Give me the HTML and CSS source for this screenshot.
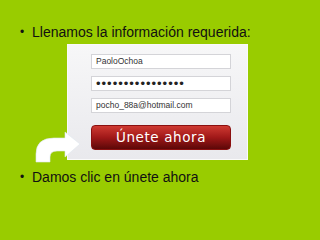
FILE: index.html
```html
<!DOCTYPE html>
<html lang="es">
<head>
    <meta charset="UTF-8">
    <meta name="viewport" content="width=device-width, initial-scale=1.0">
    <title>Registro - Únete ahora</title>
    <link rel="stylesheet" href="styles.css">
</head>
<body>
    <div class="slide">
        <p class="point">Llenamos la información requerida:</p>

        <div class="shot">
            <div class="form-panel">
                <div class="field">PaoloOchoa</div>
                <div class="field field-pass">••••••••••••••••</div>
                <div class="field">pocho_88a@hotmail.com</div>
                <div class="join-btn">Únete ahora</div>
            </div>

            <!-- curved arrow pointing to the button -->
            <svg class="arrow" width="60" height="45" viewBox="30 120 60 45">
                <path d="M36 162 L36 154 Q36 138 54 138 L65 138 L65 132 L80 144 L65 157 L65 151 L57 151 Q50 151 50 157 L50 162 Z"
                      fill="#ffffff" stroke="#dfe8ef" stroke-width="0.6"/>
            </svg>
        </div>

        <p class="point">Damos clic en únete ahora</p>
    </div>
</body>
</html>
```
FILE: styles.css
```css
body {
    margin: 0;
    padding: 0;
    background-color: #99cc00;
    font-family: "Liberation Sans", Arial, sans-serif;
}

.slide {
    width: 320px;
    height: 240px;
    padding-top: 24px;
    box-sizing: border-box;
}

.point {
    position: relative;
    margin: 0;
    padding-left: 32px;
    font-size: 14px;
    line-height: 16px;
    color: #111;
}

.point::before {
    content: "•";
    position: absolute;
    left: 20px;
    top: 0;
    font-size: 12px;
}

.shot {
    position: relative;
    margin-top: 4px;
    margin-bottom: 9px;
}

.form-panel {
    margin-left: 67px;
    width: 181px;
    height: 116px;
    box-sizing: border-box;
    padding: 9px 0 0 23px;
    background: linear-gradient(#f7f7f8, #e9e9ed);
    border: 1px solid #fafafa;
    display: flex;
    flex-direction: column;
    gap: 7px;
}

.field {
    width: 140px;
    height: 15px;
    box-sizing: border-box;
    background: #ffffff;
    border: 1px solid #d4d4d8;
    padding-left: 4px;
    font-size: 8.5px;
    line-height: 13px;
    color: #333;
}

.field-pass {
    font-size: 13px;
    letter-spacing: 1px;
    color: #222;
}

.join-btn {
    width: 140px;
    height: 25px;
    margin-top: 5px;
    box-sizing: border-box;
    border-radius: 4px;
    border: 1px solid #8a1010;
    background: linear-gradient(#cf3a32, #a01818 50%, #5c0808);
    color: #ffffff;
    text-align: center;
    font-family: "DejaVu Sans", Verdana, sans-serif;
    font-size: 13.5px;
    line-height: 23px;
    letter-spacing: 0.6px;
}

.arrow {
    position: absolute;
    left: 30px;
    top: 76px;
}
```
